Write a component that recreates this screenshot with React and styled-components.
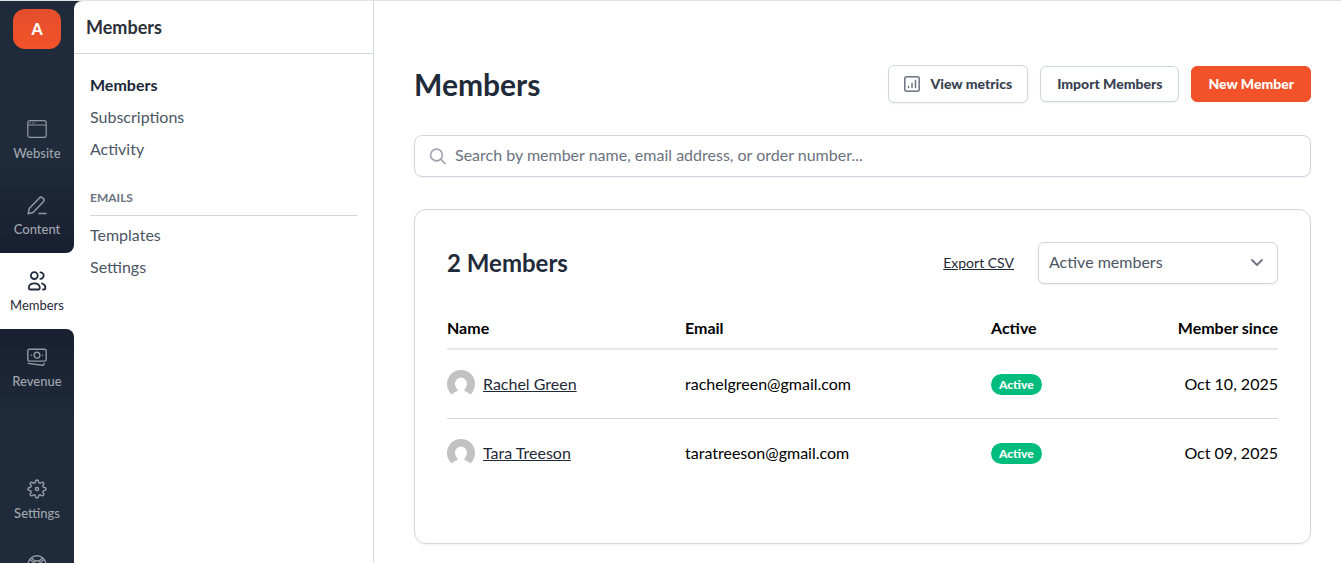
import React from 'react';
import styled, { createGlobalStyle } from 'styled-components';

const GlobalStyle = createGlobalStyle`
  *,
  *::before,
  *::after {
    box-sizing: border-box;
  }

  body {
    margin: 0;
    font-family: Lato, 'Open Sans', sans-serif;
    font-size: 16px;
    line-height: 24px;
    color: #000;
    background-color: #fff;
  }

  a {
    color: inherit;
    text-decoration: none;
  }

  h1, h2, p, ul {
    margin: 0;
    padding: 0;
  }

  button, input, select {
    font: inherit;
  }
`;

const Shell = styled.div`
  display: flex;
  height: 100vh;
  overflow: hidden;
  border-top: 1px solid #e0e2e5;
  background-color: #1f2b3a;
`;

const Rail = styled.nav`
  display: flex;
  flex-direction: column;
  flex-shrink: 0;
  width: 74px;
  overflow: hidden;
  background-color: #fff;
`;

const RailTop = styled.div`
  flex-shrink: 0;
  border-bottom-right-radius: 8px;
  background: linear-gradient(to top, #181f30, #1f2b3a 92px);
`;

const RailBottom = styled.div`
  flex: 1 0 auto;
  border-top-right-radius: 8px;
  background: linear-gradient(to bottom, #181f30, #1f2b3a 92px);
`;

const SiteButton = styled.button`
  display: block;
  width: 48px;
  height: 40px;
  margin: 8px auto 52px;
  padding: 0;
  border: 0;
  border-radius: 12px;
  background: linear-gradient(to bottom, #e34e2b, #f2532a);
  color: #fff;
  font-weight: 900;
`;

const RailLink = styled.a`
  display: flex;
  flex-direction: column;
  flex-shrink: 0;
  align-items: center;
  gap: 6px;
  height: 76px;
  padding-top: 18px;
  font-size: 13px;
  line-height: 16px;
  font-weight: ${(props) => (props.$active ? 400 : 500)};
  color: ${(props) => (props.$active ? '#1f2937' : '#a1a6ae')};

  svg {
    color: ${(props) => (props.$active ? '#1f2b3a' : '#9299a2')};
  }
`;

const RailGap = styled.div`
  height: 56px;
`;

const Panel = styled.aside`
  flex-shrink: 0;
  width: 300px;
  border-right: 1px solid #d3d6dd;
  border-top-left-radius: 8px;
  background-color: #fff;
`;

const PanelTitle = styled.p`
  padding: 14px 12px;
  border-bottom: 1px solid #d3d6dd;
  font-size: 18px;
  font-weight: 700;
  color: #2b3039;
`;

const PanelNav = styled.nav`
  padding: 16px;
`;

const PanelLink = styled.a`
  display: block;
  padding: 3px 0 5px;
  font-weight: ${(props) => (props.$active ? 700 : 400)};
  color: ${(props) => (props.$active ? '#1b2638' : '#4b5563')};
`;

const PanelHeading = styled.h2`
  margin: 24px 0 4px;
  padding-bottom: 9px;
  border-bottom: 1px solid #d3d6dd;
  font-size: 12px;
  line-height: 16px;
  font-weight: 700;
  color: #6b7280;
`;

const Main = styled.main`
  flex: 1;
  min-width: 0;
  padding: 64px 30px 20px 40px;
  background-color: #fff;
`;

const PageHeader = styled.header`
  display: flex;
  align-items: center;
  justify-content: space-between;
  margin-bottom: 32px;
`;

const PageTitle = styled.h1`
  font-size: 30px;
  line-height: 36px;
  font-weight: 700;
  color: #1f2b3a;
`;

const Actions = styled.div`
  display: flex;
  align-items: center;
  gap: 12px;
`;

const Button = styled.button`
  display: flex;
  align-items: center;
  gap: 10px;
  height: ${(props) => (props.$tall ? 38 : 36)}px;
  padding: 0 ${(props) => (props.$tall ? 15 : 16)}px;
  border: 1px solid ${(props) => (props.$primary ? '#f25229' : '#d1d5de')};
  border-radius: 6px;
  background-color: ${(props) => (props.$primary ? '#f25229' : '#fff')};
  box-shadow: ${(props) => (props.$primary ? 'none' : '0 1px 2px rgba(0, 0, 0, 0.06)')};
  font-size: 14px;
  line-height: 20px;
  font-weight: 900;
  color: ${(props) => (props.$primary ? '#fff' : '#374151')};

  svg {
    color: #6b7280;
  }
`;

const SearchBox = styled.label`
  display: flex;
  align-items: center;
  gap: 9px;
  height: 42px;
  margin-bottom: 32px;
  padding: 0 14px;
  border: 1px solid #d1d5db;
  border-radius: 8px;
  box-shadow: 0 1px 2px rgba(0, 0, 0, 0.06);
  color: #9ca3af;
`;

const SearchInput = styled.input`
  flex: 1;
  min-width: 0;
  padding: 0 0 2px;
  border: 0;
  outline: 0;
  background: transparent;
  color: #374151;

  &::placeholder {
    color: #6b7280;
    opacity: 1;
  }
`;

const Card = styled.section`
  padding: 32px 32px 56px;
  border: 1px solid #d5d7e0;
  border-radius: 12px;
  box-shadow: 0 1px 2px rgba(0, 0, 0, 0.06);
`;

const CardHeader = styled.div`
  display: flex;
  align-items: center;
  gap: 24px;
  margin-bottom: 24px;
`;

const CardTitle = styled.h2`
  flex: 1;
  font-size: 24px;
  line-height: 28px;
  font-weight: 700;
  color: #1f2b3a;
`;

const ExportLink = styled.a`
  font-size: 14px;
  line-height: 20px;
  color: #1f2937;
  text-decoration: underline;
`;

const SelectWrap = styled.div`
  display: grid;
  align-items: center;
  width: 240px;
  color: #6b7280;

  > * {
    grid-area: 1 / 1;
  }

  svg {
    justify-self: end;
    margin-right: 13px;
    pointer-events: none;
  }
`;

const Select = styled.select`
  appearance: none;
  width: 100%;
  height: 42px;
  padding: 0 40px 2px 10px;
  border: 1px solid #d1d5db;
  border-radius: 6px;
  background-color: #fff;
  box-shadow: 0 1px 2px rgba(0, 0, 0, 0.06);
  color: #4b5563;
`;

const Table = styled.table`
  width: 100%;
  table-layout: fixed;
  border-collapse: separate;
  border-spacing: 0;
`;

const Th = styled.th`
  width: ${(props) => props.$width || 'auto'};
  height: 42px;
  padding: 0;
  border-bottom: 2px solid #e5e7eb;
  font-weight: 700;
  text-align: ${(props) => props.$align || 'left'};
`;

const Td = styled.td`
  height: 69px;
  padding: 0;
  border-bottom: 1px solid #d3d6dd;
  text-align: ${(props) => props.$align || 'left'};

  tr:last-child > & {
    height: 68px;
    border-bottom: 0;
  }
`;

const MemberLink = styled.a`
  display: flex;
  align-items: center;
  gap: 8px;
  color: #1f2937;

  span {
    text-decoration: underline;
  }
`;

const Badge = styled.span`
  display: block;
  width: fit-content;
  padding: 0 8px;
  border-radius: 11px;
  background-color: #00bd7e;
  color: #fff;
  font-size: 12px;
  line-height: 21px;
  font-weight: 900;
`;

const Icon = ({ size = 20, stroke = 1.2, children }) => (
  <svg
    width={size}
    height={size}
    viewBox={`0 0 ${size} ${size}`}
    fill="none"
    stroke="currentColor"
    strokeWidth={stroke}
    strokeLinecap="round"
    strokeLinejoin="round"
    aria-hidden="true"
  >
    {children}
  </svg>
);

const WebsiteIcon = () => (
  <Icon>
    <rect x="0.8" y="1.6" width="18.4" height="16.8" rx="2.2" />
    <path d="M0.8 6h18.4" />
    <path d="M3.2 3.8h.1M5.4 3.8h.1M7.6 3.8h.1" />
  </Icon>
);

const ContentIcon = () => (
  <Icon stroke={1.5}>
    <path d="M1.2 18.8l1-5.2L12.4 2.9c.9-.9 2.2-.9 3.1-.1l.8.8c.9.9.9 2.2 0 3.1L6.1 17.5z" />
    <path d="M12 18.4h7" />
  </Icon>
);

const MembersIcon = () => (
  <Icon stroke={1.8}>
    <circle cx="7.3" cy="4.6" r="3.4" />
    <path d="M13.4 1.3a3.3 3.3 0 0 1 0 6.6" />
    <path d="M7.3 12.3c3.2 0 5.5 1.9 5.5 4.4v.6c0 .7-.5 1.2-1.2 1.2H3c-.7 0-1.2-.5-1.2-1.2v-.6c0-2.5 2.3-4.4 5.5-4.4z" />
    <path d="M15 12.5c2 .6 3.4 2.2 3.4 4.2v.6c0 .7-.5 1.2-1.2 1.2H16" />
  </Icon>
);

const RevenueIcon = () => (
  <Icon stroke={1.4}>
    <rect x="0.8" y="2.3" width="18.4" height="11.8" rx="1.6" />
    <circle cx="10" cy="8.2" r="2.9" />
    <path d="M4.5 8.2h.1M15.4 8.2h.1" />
    <path d="M1.2 16.4l14 1.9c.8.1 1.500-.3 1.800-1.100l.3-.8" />
  </Icon>
);

// Eight rounded teeth around a 9px radius
const gearPath = Array.from({ length: 96 }, (_, i) => {
  const angle = (i / 96) * Math.PI * 2;
  const radius = 7.7 + 1.3 * Math.tanh(1.8 * Math.cos(8 * angle));
  const x = 10 + radius * Math.cos(angle);
  const y = 10 + radius * Math.sin(angle);
  return `${i ? 'L' : 'M'}${x.toFixed(2)} ${y.toFixed(2)}`;
}).join('');

const SettingsIcon = () => (
  <Icon stroke={1.5}>
    <path d={`${gearPath}z`} />
    <circle cx="10" cy="10" r="1.6" />
  </Icon>
);

const HelpIcon = () => (
  <Icon stroke={1.4}>
    <circle cx="10" cy="9.8" r="9" />
    <circle cx="10" cy="9.8" r="4" />
    <path d="M3.2 4.4l3.3 3M4.6 3l3.2 3M16.8 4.4l-3.3 3M15.4 3l-3.2 3" />
    <path d="M3.2 15.2l3.3-3M16.8 15.2l-3.3-3" />
  </Icon>
);

const MetricsIcon = () => (
  <Icon size={16} stroke={1.5}>
    <rect x="0.8" y="0.8" width="14.4" height="14.4" rx="2" />
    <path d="M4.5 10.5v1M8 7.5v4M11.5 4.5v7" />
  </Icon>
);

const SearchIcon = () => (
  <Icon size={17} stroke={1.6}>
    <circle cx="7.5" cy="7" r="5.9" />
    <path d="M11.8 11.3l4.2 4.2" />
  </Icon>
);

const ChevronIcon = () => (
  <Icon size={16} stroke={1.8}>
    <path d="M3 5l5 5 5-5" />
  </Icon>
);

const Avatar = () => (
  <svg width="28" height="28" viewBox="0 0 28 28" aria-hidden="true">
    <circle cx="14" cy="14" r="14" fill="#c2c2c2" />
    <ellipse cx="14" cy="14" rx="6" ry="6.5" fill="#fff" />
    <path d="M10.5 18v3c-2.500.7-4.700 2-5.800 3.600V28h18.600v-3.400c-1.100-1.600-3.300-2.900-5.800-3.600v-3z" fill="#fff" />
  </svg>
);

const App = () => {
  const members = [
    {
      name: 'Rachel Green',
      email: 'rachelgreen@gmail.com',
      status: 'Active',
      since: 'Oct 10, 2025',
    },
    {
      name: 'Tara Treeson',
      email: 'taratreeson@gmail.com',
      status: 'Active',
      since: 'Oct 09, 2025',
    },
  ];

  return (
    <>
      <GlobalStyle />
      <Shell>
        <Rail>
          <RailTop>
            <SiteButton type="button">A</SiteButton>
            <RailLink href="#website"><WebsiteIcon />Website</RailLink>
            <RailLink href="#content"><ContentIcon />Content</RailLink>
          </RailTop>
          <RailLink href="#members" $active><MembersIcon />Members</RailLink>
          <RailBottom>
            <RailLink href="#revenue"><RevenueIcon />Revenue</RailLink>
            <RailGap />
            <RailLink href="#settings"><SettingsIcon />Settings</RailLink>
            <RailLink href="#help" aria-label="Help"><HelpIcon /></RailLink>
          </RailBottom>
        </Rail>

        <Panel>
          <PanelTitle>Members</PanelTitle>
          <PanelNav>
            <PanelLink href="#members" $active>Members</PanelLink>
            <PanelLink href="#subscriptions">Subscriptions</PanelLink>
            <PanelLink href="#activity">Activity</PanelLink>
            <PanelHeading>EMAILS</PanelHeading>
            <PanelLink href="#templates">Templates</PanelLink>
            <PanelLink href="#email-settings">Settings</PanelLink>
          </PanelNav>
        </Panel>

        <Main>
          <PageHeader>
            <PageTitle>Members</PageTitle>
            <Actions>
              <Button type="button" $tall><MetricsIcon />View metrics</Button>
              <Button type="button">Import Members</Button>
              <Button type="button" $primary>New Member</Button>
            </Actions>
          </PageHeader>

          <SearchBox>
            <SearchIcon />
            <SearchInput
              type="text"
              aria-label="Search members"
              placeholder="Search by member name, email address, or order number..."
            />
          </SearchBox>

          <Card>
            <CardHeader>
              <CardTitle>2 Members</CardTitle>
              <ExportLink href="#export">Export CSV</ExportLink>
              <SelectWrap>
                <Select aria-label="Filter members" defaultValue="active">
                  <option value="active">Active members</option>
                </Select>
                <ChevronIcon />
              </SelectWrap>
            </CardHeader>

            <Table>
              <thead>
                <tr>
                  <Th $width="238px">Name</Th>
                  <Th>Email</Th>
                  <Th $width="120px">Active</Th>
                  <Th $width="167px" $align="right">Member since</Th>
                </tr>
              </thead>
              <tbody>
                {members.map((member) => (
                  <tr key={member.email}>
                    <Td>
                      <MemberLink href="#member">
                        <Avatar />
                        <span>{member.name}</span>
                      </MemberLink>
                    </Td>
                    <Td>{member.email}</Td>
                    <Td><Badge>{member.status}</Badge></Td>
                    <Td $align="right">{member.since}</Td>
                  </tr>
                ))}
              </tbody>
            </Table>
          </Card>
        </Main>
      </Shell>
    </>
  );
};

export default App;
